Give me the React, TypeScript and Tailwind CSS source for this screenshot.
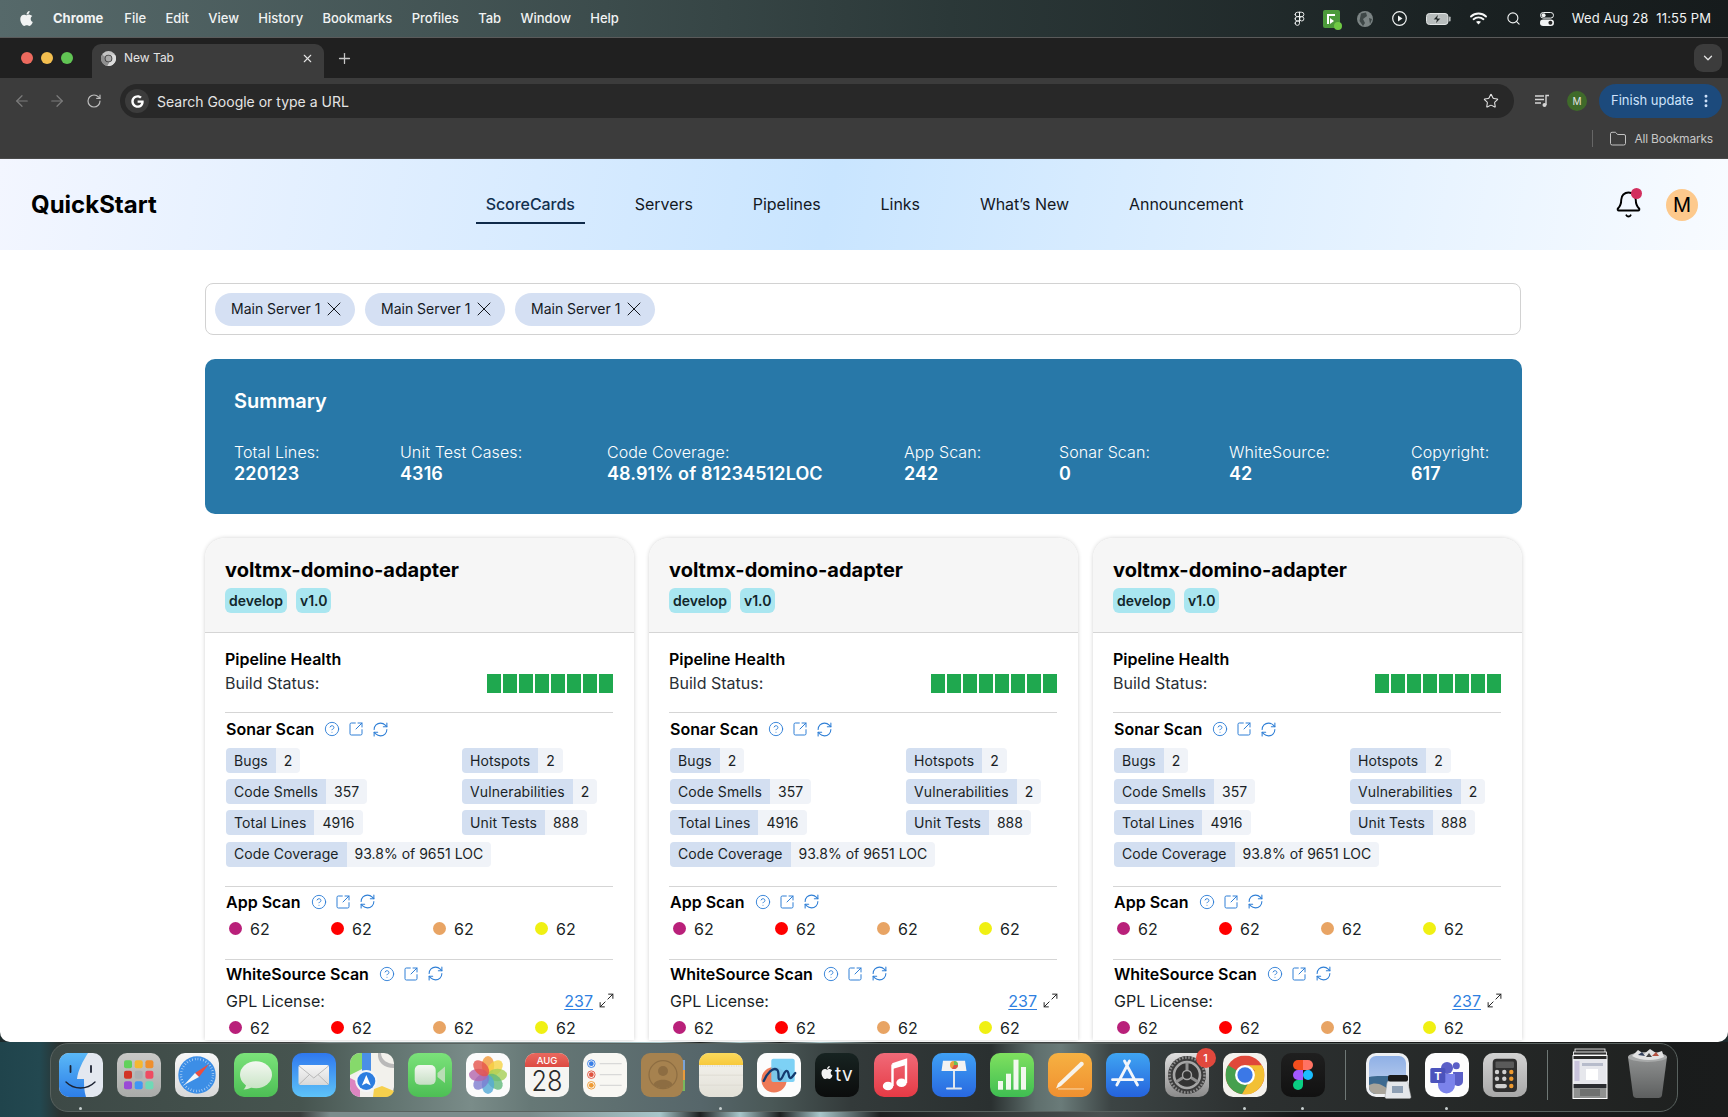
import { FaApple, FaGoogle } from "react-icons/fa";
import {
  ArrowLeft,
  ArrowRight,
  Bell,
  ChevronDown,
  CircleHelp,
  EllipsisVertical,
  Figma,
  Folder,
  Maximize2,
  Plus,
  RefreshCw,
  RotateCw,
  Search,
  Star,
  SquareArrowOutUpRight,
  X,
} from "lucide-react";
import type { ReactNode } from "react";

const menuItems = ["File", "Edit", "View", "History", "Bookmarks", "Profiles", "Tab", "Window", "Help"];
const navItems = ["Servers", "Pipelines", "Links", "What’s New", "Announcement"];
const summary = [
  ["Total Lines:", "220123"],
  ["Unit Test Cases:", "4316"],
  ["Code Coverage:", "48.91% of 81234512LOC"],
  ["App Scan:", "242"],
  ["Sonar Scan:", "0"],
  ["WhiteSource:", "42"],
  ["Copyright:", "617"],
];

// dock tiles are all drawn on the same 44 box
const Tile = ({ children }: { children: ReactNode }) => (
  <svg width="44" height="44" viewBox="0 0 44 44" className="overflow-visible">
    {children}
  </svg>
);

const Grad = ({ id, from, to }: { id: string; from: string; to: string }) => (
  <defs>
    <linearGradient id={id} x1="0" y1="0" x2="0" y2="1">
      <stop offset="0" stopColor={from} />
      <stop offset="1" stopColor={to} />
    </linearGradient>
  </defs>
);

const ChromeLogo = ({ size = 14, grey = false }: { size?: number; grey?: boolean }) => (
  <svg width={size} height={size} viewBox="0 0 24 24">
    <circle cx="12" cy="12" r="12" fill={grey ? "#c4c4c4" : "#e0483a"} />
    <path d="M1.6 6 A12 12 0 0 0 10.2 23.9 L15.2 15 L12 12 L6.8 9 Z" fill={grey ? "#8f8f8f" : "#46a04d"} />
    <path d="M22.4 6 A12 12 0 0 1 10.2 23.9 L15.2 15 L18 9 L12 6 Z" fill={grey ? "#dcdcdc" : "#f2c034"} />
    <circle cx="12" cy="12" r="6.1" fill={grey ? "#3c3c3c" : "#fff"} />
    <circle cx="12" cy="12" r="4.7" fill={grey ? "#a8a8a8" : "#3b78e7"} />
  </svg>
);

const Finder = () => (
  <Tile>
    <Grad id="finderBlue" from="#5ab8f7" to="#2d7ee8" />
    <rect width="44" height="44" rx="10" fill="#e3e8f0" />
    <path d="M10 0 H29 C24 8 19 17 18 26 H25 C25 32 25 38 27 44 H10 A10 10 0 0 1 0 34 V10 A10 10 0 0 1 10 0 Z" fill="url(#finderBlue)" />
    <path d="M11.5 13 v6 M32 13 v6" stroke="#1c2333" strokeWidth="1.8" strokeLinecap="round" />
    <path d="M7 29 C15 37 28 37 36 29" stroke="#1c2333" strokeWidth="1.4" fill="none" strokeLinecap="round" />
  </Tile>
);

const Launchpad = () => {
  const colors = ["#62d15b", "#f5b731", "#ee8f2e", "#d13325", "#aab0b3", "#ee4c62", "#9a4ad6", "#3f97f5", "#6fd9b6"];
  return (
    <Tile>
      <Grad id="padBg" from="#c9c9c7" to="#a9aba9" />
      <rect width="44" height="44" rx="10" fill="url(#padBg)" />
      {colors.map((c, i) => (
        <rect key={i} x={7 + (i % 3) * 10.7} y={7.3 + Math.floor(i / 3) * 10.5} width="8" height="8" rx="2" fill={c} />
      ))}
    </Tile>
  );
};

const Safari = () => (
  <Tile>
    <Grad id="safariBg" from="#f8f8f8" to="#d8d8d8" />
    <rect width="44" height="44" rx="10" fill="url(#safariBg)" />
    <circle cx="22" cy="22" r="18.7" fill="#3c8ee6" />
    <circle cx="22" cy="22" r="16" fill="none" stroke="#cfe4fa" strokeWidth="2.4" strokeDasharray="0.6 2.2" />
    <path d="M34 11 L24 24 L20 20 Z" fill="#ec4d3f" />
    <path d="M9 32 L20 20 L24 24 Z" fill="#f5f5f5" />
  </Tile>
);

const Messages = () => (
  <Tile>
    <Grad id="msgBg" from="#7be27a" to="#4dbf55" />
    <Grad id="msgBubble" from="#f4f8f2" to="#c9e4c6" />
    <rect width="44" height="44" rx="10" fill="url(#msgBg)" />
    <path d="M12 31 C12 34 11 35 9.5 36.5 C13 36.5 16 35.5 18 34 Z" fill="#d3e8d0" />
    <ellipse cx="22" cy="21.7" rx="16" ry="13.5" fill="url(#msgBubble)" />
  </Tile>
);

const Mail = () => (
  <Tile>
    <Grad id="mailBg" from="#2f78ee" to="#5ec3f8" />
    <Grad id="mailEnv" from="#f6f6f6" to="#d9d9d9" />
    <rect width="44" height="44" rx="10" fill="url(#mailBg)" />
    <rect x="6.5" y="12" width="30.5" height="20" rx="2" fill="url(#mailEnv)" />
    <path d="M7 13 L21.8 25 L36.5 13 M7 31.5 L17.5 21.5 M36.5 31.5 L26 21.5" stroke="#adadad" strokeWidth="0.8" fill="none" />
  </Tile>
);

const Maps = () => (
  <Tile>
    <rect width="44" height="44" rx="10" fill="#f2f1ec" />
    <path d="M10 0 H12 V16 L0 22 V10 A10 10 0 0 1 10 0 Z" fill="#86d96b" />
    <path d="M0 25 L10 30 V44 A10 10 0 0 1 0 34 Z" fill="#dc85c0" />
    <path d="M23 44 L24 36 L32 33 L44 38 A10 10 0 0 1 34 44 Z" fill="#f6d04d" />
    <rect x="12" y="0" width="9" height="20" fill="#4a8fe6" />
    <path d="M44 15 C34 15 27 9 28 0 H31 C31 7 38 11 44 11 Z" fill="#b9b9b9" />
    <circle cx="16.3" cy="28" r="11" fill="#f4f6f8" />
    <circle cx="16.3" cy="28" r="9" fill="#2c7de0" />
    <path d="M16.3 22 L20.8 32.5 L16.3 30.3 L11.8 32.5 Z" fill="#fff" />
  </Tile>
);

const FaceTime = () => (
  <Tile>
    <Grad id="ftBg" from="#7be27a" to="#4dbf55" />
    <Grad id="ftCam" from="#f2f7f0" to="#c6dec4" />
    <rect width="44" height="44" rx="10" fill="url(#ftBg)" />
    <rect x="6.7" y="12" width="21" height="19.7" rx="5" fill="url(#ftCam)" />
    <path d="M29.5 20 L37 13.5 V30 L29.5 24 Z" fill="#b9ddb5" />
  </Tile>
);

const Photos = () => {
  const petals = ["#f39a3a", "#f6d344", "#a6cf55", "#62b97c", "#53a9d7", "#7d7ccf", "#b365ac", "#e5534b"];
  return (
    <Tile>
      <rect width="44" height="44" rx="10" fill="#fbfbfb" />
      {petals.map((c, i) => (
        <ellipse key={i} cx="22" cy="12.5" rx="6.2" ry="9.5" fill={c} fillOpacity="0.8" transform={`rotate(${i * 45} 22 22)`} />
      ))}
    </Tile>
  );
};

const Calendar = () => (
  <Tile>
    <Grad id="calTop" from="#e9695f" to="#dd4a42" />
    <rect width="44" height="44" rx="10" fill="#f6f5f2" />
    <path d="M10 0 H34 A10 10 0 0 1 44 10 V14 H0 V10 A10 10 0 0 1 10 0 Z" fill="url(#calTop)" />
    <text x="22" y="11" textAnchor="middle" fontSize="9.5" fontWeight="500" fill="#fff" fontFamily="Inter, sans-serif">AUG</text>
    <text x="22" y="37.5" textAnchor="middle" fontSize="28" fontWeight="300" fill="#2a2a2a" fontFamily="Inter, sans-serif" textLength="31" lengthAdjust="spacingAndGlyphs">28</text>
  </Tile>
);

const Reminders = () => (
  <Tile>
    <rect width="44" height="44" rx="10" fill="#f8f7f3" />
    {[
      { c: "#3a7fe8", y: 10.7 },
      { c: "#e0523f", y: 21.7 },
      { c: "#ee9a33", y: 32.3 },
    ].map(({ c, y }) => (
      <g key={c}>
        <circle cx="8.3" cy={y} r="3.8" fill="none" stroke={c} strokeWidth="0.9" />
        <circle cx="8.3" cy={y} r="2.4" fill={c} />
        <rect x="16.7" y={y - 0.5} width="22" height="1" fill="#d2d2d2" />
      </g>
    ))}
  </Tile>
);

const Contacts = () => (
  <Tile>
    <rect x="40" y="7" width="4" height="10" fill="#7aa3d8" />
    <rect x="40" y="17" width="4" height="10" fill="#e99b3c" />
    <rect x="40" y="27" width="4" height="11" fill="#79b95c" />
    <rect width="42" height="44" rx="9" fill="#a6824f" />
    <circle cx="22" cy="21.7" r="14" fill="none" stroke="#8d6d42" strokeWidth="1.2" />
    <circle cx="22" cy="18" r="5" fill="#8d6d42" />
    <path d="M12.5 31.5 C14 25 30 25 31.5 31.5 A14 14 0 0 1 12.5 31.5 Z" fill="#8d6d42" />
  </Tile>
);

const Notes = () => (
  <Tile>
    <Grad id="noteTop" from="#fbd95c" to="#f7c93c" />
    <Grad id="noteBody" from="#f6f5f0" to="#e2e0d7" />
    <rect width="44" height="44" rx="10" fill="url(#noteBody)" />
    <path d="M10 0 H34 A10 10 0 0 1 44 10 V12 H0 V10 A10 10 0 0 1 10 0 Z" fill="url(#noteTop)" />
    <path d="M1 13 H43" stroke="#c9c7bd" strokeWidth="0.7" strokeDasharray="1 1.4" />
    {[21.7, 31.7].map((y) => (
      <rect key={y} x="0" y={y} width="44" height="0.9" fill="#dddbd2" />
    ))}
  </Tile>
);

const Freeform = () => (
  <Tile>
    <rect width="44" height="44" rx="10" fill="#fcfcfc" />
    <circle cx="17" cy="26.7" r="12.7" fill="#ee7a58" />
    <rect x="14.3" y="5.7" width="23.4" height="23.3" rx="2" fill="#72cdf4" fillOpacity="0.92" />
    <path d="M6.7 28 C10 20 16 14 20 16.7 C23 19 20 27 23 26.7 C26 26 27 17 30 18 C32.5 19 31 25 33.3 25 C35 25 36.5 22 38.3 20" stroke="#143a6e" strokeWidth="2.3" fill="none" strokeLinecap="round" />
  </Tile>
);

const AppleTv = () => (
  <Tile>
    <Grad id="tvBg" from="#172321" to="#0b0c0c" />
    <rect width="44" height="44" rx="10" fill="url(#tvBg)" />
    <FaApple x="4.5" y="12" size="15" color="#f2f2f2" />
    <text x="20" y="28" fontSize="19" letterSpacing="0.5" fill="#f2f2f2" fontFamily="Inter, sans-serif">tv</text>
  </Tile>
);

const Music = () => (
  <Tile>
    <Grad id="musicBg" from="#f06a78" to="#e63a45" />
    <rect width="44" height="44" rx="10" fill="url(#musicBg)" />
    <path d="M18.5 11.5 L32 7 V30 M18.5 11.5 V33" stroke="#fff" strokeWidth="2.4" fill="none" />
    <path d="M18.5 11 L32 7 V12 L18.5 16 Z" fill="#fff" />
    <ellipse cx="14" cy="33" rx="5.2" ry="4.3" fill="#fff" />
    <ellipse cx="27.5" cy="29.8" rx="5.2" ry="4.3" fill="#fff" />
  </Tile>
);

const Keynote = () => (
  <Tile>
    <Grad id="keyBg" from="#3fa0f4" to="#2868e0" />
    <rect width="44" height="44" rx="10" fill="url(#keyBg)" />
    <path d="M11 7.7 H33 L34.5 18 H9.5 Z" fill="#f2f2f2" />
    <circle cx="22" cy="12" r="4" fill="#e9a13c" />
    <path d="M22 12 V8 A4 4 0 0 1 26 12 Z" fill="#6bbf59" />
    <path d="M22 12 H26 A4 4 0 0 1 20 15.4 Z" fill="#d8524a" />
    <rect x="21" y="18" width="2" height="17" fill="#dfe6ee" />
    <rect x="14" y="34.5" width="16" height="2" rx="1" fill="#dfe6ee" />
  </Tile>
);

const Numbers = () => (
  <Tile>
    <Grad id="numBg" from="#7fe05f" to="#3fbe52" />
    <rect width="44" height="44" rx="10" fill="url(#numBg)" />
    <rect x="8" y="28" width="5" height="8.7" fill="#f1f8ee" />
    <rect x="16" y="20.7" width="5" height="16" fill="#f1f8ee" />
    <rect x="23.5" y="6.7" width="5" height="30" fill="#f1f8ee" />
    <rect x="31" y="14" width="5" height="22.7" fill="#f1f8ee" />
  </Tile>
);

const Pages = () => (
  <Tile>
    <Grad id="pagesBg" from="#f6b142" to="#f09030" />
    <rect width="44" height="44" rx="10" fill="url(#pagesBg)" />
    <path d="M32.5 9 C34.5 8 36.5 10 35.5 12 L13 33 L8 35.5 L10 30.5 Z" fill="#f7f3ea" />
    <rect x="10" y="35.3" width="26" height="1.3" fill="#f8cb92" />
  </Tile>
);

const AppStore = () => (
  <Tile>
    <Grad id="storeBg" from="#3fa5f2" to="#2563dd" />
    <rect width="44" height="44" rx="10" fill="url(#storeBg)" />
    <path d="M18.5 8 L31.5 32 M23.5 8 L10.8 32 M6.5 26.7 H36.5" stroke="#f2f6fb" strokeWidth="2.8" strokeLinecap="round" />
  </Tile>
);

const SettingsIcon = () => (
  <Tile>
    <Grad id="setBg" from="#e0e0e0" to="#8a8a8a" />
    <rect width="44" height="44" rx="10" fill="url(#setBg)" />
    <circle cx="22" cy="22" r="19" fill="#3c3c3c" />
    <circle cx="22" cy="22" r="17.5" fill="none" stroke="#8d8d8d" strokeWidth="2.6" strokeDasharray="1.6 1.6" />
    <circle cx="22" cy="22" r="13" fill="#333" stroke="#a6a6a6" strokeWidth="2.6" />
    <path d="M22 22 V9.5 M22 22 L11 29 M22 22 L33 29" stroke="#8f8f8f" strokeWidth="3" />
    <circle cx="22" cy="22" r="4.5" fill="#333" stroke="#a6a6a6" strokeWidth="1.4" />
  </Tile>
);

const ChromeTile = () => (
  <Tile>
    <rect width="44" height="44" rx="10" fill="#f4f2ee" />
    <g transform="translate(2.5 2.5)">
      <ChromeLogo size={39} />
    </g>
  </Tile>
);

const FigmaTile = () => (
  <Tile>
    <Grad id="figmaBg" from="#1f1f1f" to="#111" />
    <rect width="44" height="44" rx="10" fill="url(#figmaBg)" />
    <path d="M17 7 H22 V17 H17 A5 5 0 0 1 17 7 Z" fill="#f24e1e" />
    <path d="M22 7 H27 A5 5 0 0 1 27 17 H22 Z" fill="#ff7262" />
    <path d="M17 17 H22 V27 H17 A5 5 0 0 1 17 17 Z" fill="#a259ff" />
    <circle cx="27" cy="22" r="5" fill="#1abcfe" />
    <path d="M17 27 H22 V32 A5 5 0 1 1 17 27 Z" fill="#0acf83" />
  </Tile>
);

const Preview = () => (
  <Tile>
    <Grad id="prevSky" from="#8fb0e6" to="#c4d4ee" />
    <rect width="43" height="44" rx="10" fill="#eef0f3" />
    <rect x="3" y="3" width="37" height="38" rx="7" fill="url(#prevSky)" />
    <path d="M3 24 C12 22 26 24 40 23 V34 A7 7 0 0 1 33 41 H10 A7 7 0 0 1 3 34 Z" fill="#3d6a90" />
    <path d="M3 32 C10 28 18 32 24 38 V41 H10 A7 7 0 0 1 3 34 Z" fill="#a8a49a" />
    <path d="M21 30 C21 28 23 28 24 28 H40 C41 28 42 29 42 30 L45 44 C45 45 44 45.5 43 45.5 H21 C20 45.5 19 45 19 44 Z" fill="#e4e7ea" stroke="#9a9a9a" strokeWidth="0.5" />
    <rect x="22" y="22" width="20" height="6.5" rx="2" fill="#1a1a1a" />
    <rect x="26" y="33" width="11" height="7" fill="#8ea0b4" />
  </Tile>
);

const Teams = () => (
  <Tile>
    <rect width="44" height="44" rx="10" fill="#fdfdfd" />
    <circle cx="22" cy="15" r="6" fill="#5b5fc7" />
    <circle cx="31.3" cy="12.7" r="3.5" fill="#5b5fc7" />
    <path d="M28 19 H38 V28 A5 5 0 0 1 29 31 Z" fill="#5b5fc7" />
    <path d="M13 21 H30 V32 A8.5 8.5 0 0 1 13 32 Z" fill="#7b83eb" />
    <rect x="5.3" y="15" width="15" height="15" rx="1.5" fill="#4b53bc" />
    <text x="12.8" y="26.5" textAnchor="middle" fontSize="11" fontWeight="700" fill="#fff" fontFamily="Inter, sans-serif">T</text>
  </Tile>
);

const Calculator = () => (
  <Tile>
    <Grad id="calcBg" from="#d2d2d2" to="#a8a8a8" />
    <rect width="44" height="44" rx="10" fill="url(#calcBg)" />
    <rect x="9.7" y="5.7" width="24.3" height="33.3" rx="4" fill="#2f2f2f" />
    <rect x="12.5" y="8.5" width="18.5" height="6.5" rx="1" fill="#5a5a5a" />
    {[19, 25.7].map((y) =>
      [14, 21.3, 28.3].map((x) => (
        <circle key={`${x}-${y}`} cx={x} cy={y} r="2.2" fill={x === 28.3 ? "#ef9a2f" : "#cfcfcf"} />
      ))
    )}
    <rect x="12" y="31" width="12" height="4.2" rx="2.1" fill="#cfcfcf" />
    <circle cx="28.3" cy="33" r="2.2" fill="#ef9a2f" />
  </Tile>
);

const DocThumb = () => (
  <Tile>
    <rect x="7" y="-4" width="30" height="4" fill="#333" stroke="#fff" strokeWidth="0.8" />
    <rect x="5.5" y="-1" width="33" height="3" fill="#333" stroke="#fff" strokeWidth="0.8" />
    <rect x="4.5" y="2" width="35" height="44" fill="#fff" />
    <rect x="5.5" y="3" width="33" height="28" fill="#e6e7ec" />
    <rect x="5.5" y="3" width="33" height="3" fill="#2a2a2a" />
    <rect x="6.5" y="8" width="5" height="20" fill="#c9c4dc" />
    <rect x="14" y="10" width="21" height="3" fill="#b7bccb" />
    <rect x="18" y="16" width="12" height="11" fill="#fff" />
    <rect x="5.5" y="31" width="33" height="4" fill="#2a2c30" />
    <rect x="5.5" y="35" width="33" height="10" fill="#8f9190" />
    <rect x="12" y="36" width="20" height="7" fill="#6f7170" />
  </Tile>
);

const Trash = () => (
  <Tile>
    <Grad id="trashBody" from="#8f9191" to="#5d5f5f" />
    <path d="M2 4 H41 L36 42 C35.5 45 33 45 31 45 H12 C10 45 7.5 45 7 42 Z" fill="url(#trashBody)" />
    <ellipse cx="21.5" cy="4" rx="19.5" ry="5" fill="#a8aaaa" />
    <path d="M6 3 L12 -3 L18 1 L24 -4 L30 0 L36 -2 L38 4 C30 8 14 8 6 3 Z" fill="#e2e2e2" />
    <path d="M12 2 L16 -1 L19 3 Z" fill="#33405a" />
    <path d="M26 3 L30 -1 L33 3 Z" fill="#b4503f" />
    <path d="M20 4 L23 0 L26 4 Z" fill="#444" />
  </Tile>
);

const DockItem = ({ children, running }: { children: ReactNode; running?: boolean }) => (
  <div className="relative h-11 w-11 shrink-0">
    {children}
    {running && <span className="absolute bottom-[-13px] left-[20px] h-[3px] w-[3px] rounded-full bg-[#c8d0d0]" />}
  </div>
);

const Dock = () => (
  <div className="flex h-[75px] shrink-0 justify-center bg-[linear-gradient(90deg,#20444c_0px,#234850_40px,#2a3230_60px,#3a3d3c_300px,#7c8c8c_330px,#7c8c8c_530px,#a8c6ca_660px,#1d2020_700px,#a8c6ca_740px,#1d2020_780px,#a8c6ca_820px,#1d2020_880px,#4a5050_1100px,#161818_1300px,#1a1c1c_1728px)]">
    <div className="mt-px flex h-[69px] w-[1628px] items-center gap-[14.2px] rounded-[18px] border border-[#59625f] bg-[linear-gradient(90deg,#3d4946_0px,#46544f_250px,#5f716d_330px,#7a8c89_420px,#667876_480px,#56666a_650px,#4a5857_720px,#333a3a_800px,#2a3030_940px,#5f6f6d_985px,#6a7b79_1010px,#3c4444_1060px,#2c3030_1200px,#1f2120_1628px)] pb-[5px] pl-[8px]">
      <DockItem running><Finder /></DockItem>
      <DockItem><Launchpad /></DockItem>
      <DockItem><Safari /></DockItem>
      <DockItem><Messages /></DockItem>
      <DockItem><Mail /></DockItem>
      <DockItem><Maps /></DockItem>
      <DockItem><FaceTime /></DockItem>
      <DockItem><Photos /></DockItem>
      <DockItem><Calendar /></DockItem>
      <DockItem><Reminders /></DockItem>
      <DockItem><Contacts /></DockItem>
      <DockItem running><Notes /></DockItem>
      <DockItem><Freeform /></DockItem>
      <DockItem><AppleTv /></DockItem>
      <DockItem><Music /></DockItem>
      <DockItem><Keynote /></DockItem>
      <DockItem><Numbers /></DockItem>
      <DockItem><Pages /></DockItem>
      <DockItem><AppStore /></DockItem>
      <DockItem>
        <SettingsIcon />
        <span className="absolute right-[-7px] top-[-5px] flex h-5 w-5 items-center justify-center rounded-full bg-[#e2483d] text-[11px] font-medium text-white">1</span>
      </DockItem>
      <DockItem running><ChromeTile /></DockItem>
      <DockItem running><FigmaTile /></DockItem>
      <div className="mx-[6px] h-[50px] w-px bg-[#6f7876]" />
      <DockItem><Preview /></DockItem>
      <DockItem running><Teams /></DockItem>
      <DockItem><Calculator /></DockItem>
      <div className="mx-[6px] h-[50px] w-px bg-[#6f7876]" />
      <DockItem><DocThumb /></DockItem>
      <DockItem><Trash /></DockItem>
    </div>
  </div>
);

const MenuBar = () => (
  <div className="flex h-[37px] shrink-0 items-center bg-[linear-gradient(90deg,#56696a_0%,#3c4c4c_35%,#2b3838_55%,#1a2122_85%,#161b1c_100%)] pl-[18px] pr-[17px] text-[13px] font-medium text-[#f1f3f3]">
    <FaApple size={17} />
    <span className="ml-[18px] font-bold">Chrome</span>
    <div className="ml-[21px] flex gap-[19.3px]">
      {menuItems.map((m) => (
        <span key={m}>{m}</span>
      ))}
    </div>
    <div className="ml-auto flex items-center gap-[19px]">
      <Figma size={15} strokeWidth={1.5} className="-ml-[2px] -mr-[3px]" />
      <span className="relative -mr-[2px] block h-[18px] w-[17px] rounded-[2px] bg-[#4c9a3a]">
        <span className="absolute left-[4px] top-[4px] block h-[10px] w-[8px] border-l-2 border-t-2 border-white" />
        <span className="absolute left-[7px] top-[8px] block h-0 w-0 border-y-[3px] border-l-[4px] border-y-transparent border-l-white" />
        <span className="absolute bottom-[-2px] right-[-2px] block h-[8px] w-[8px] rounded-full bg-[#6fc944]" />
      </span>
      <svg width="16" height="16" viewBox="0 0 16 16">
        <circle cx="8" cy="8" r="8" fill="#7b8484" />
        <path d="M4 2.5 L9 1.5 L10 5 L6 8 L8 12 L6 15 L2.5 10 Z M12 7 L15 8 L13 13 Z" fill="#3e4747" />
      </svg>
      <svg width="15" height="15" viewBox="0 0 15 15">
        <circle cx="7.5" cy="7.5" r="6.8" fill="none" stroke="#f1f3f3" strokeWidth="1.2" />
        <path d="M6 4.5 L10.5 7.5 L6 10.5 Z" fill="#f1f3f3" />
      </svg>
      <svg width="25" height="12" viewBox="0 0 25 12">
        <rect x="0.5" y="0.5" width="21.5" height="11" rx="3" fill="#b7bcbc" stroke="#e2e5e5" />
        <rect x="23" y="3.5" width="1.6" height="5" rx="0.8" fill="#b7bcbc" />
        <path d="M12.5 1 L7 6.8 H10.5 L9.5 11 L15 5.2 H11.5 Z" fill="#1f2626" stroke="#e8eaea" strokeWidth="0.5" />
      </svg>
      <svg width="17" height="13" viewBox="0 0 17 13">
        <path d="M1 4.5 C5.2 0.5 11.8 0.5 16 4.5 M3.6 7.2 C6.3 4.7 10.7 4.7 13.4 7.2" stroke="#f6f7f7" strokeWidth="1.9" fill="none" strokeLinecap="round" />
        <path d="M6 9.8 C7.4 8.6 9.6 8.6 11 9.8 L8.5 12.6 Z" fill="#f6f7f7" />
      </svg>
      <Search size={15} strokeWidth={1.8} />
      <svg width="14" height="14" viewBox="0 0 14 14">
        <rect x="0.5" y="0.5" width="13" height="5.6" rx="2.8" fill="none" stroke="#f1f3f3" strokeWidth="1" />
        <circle cx="3.6" cy="3.3" r="2" fill="#f1f3f3" />
        <rect x="0" y="7.5" width="14" height="6.5" rx="3.2" fill="#f1f3f3" />
        <circle cx="10.4" cy="10.7" r="2" fill="#222" />
      </svg>
      <div className="ml-[-1px] flex gap-[8px] font-normal tracking-[0.1px]">
        <span>Wed Aug 28</span>
        <span>11:55 PM</span>
      </div>
    </div>
  </div>
);

const BrowserChrome = () => (
  <div className="shrink-0 bg-[#3c3c3c] text-[#e4e4e4]">
    <div className="flex h-[41px] items-end border-t border-[#5a5a5a] bg-[#202020] pr-[6px]">
      <div className="flex h-[40px] w-[92px] items-center gap-[8px] pl-[21px]">
        <span className="h-3 w-3 rounded-full bg-[#ed6a5e]" />
        <span className="h-3 w-3 rounded-full bg-[#f4bf4f]" />
        <span className="h-3 w-3 rounded-full bg-[#61c554]" />
      </div>
      <div className="flex h-[34px] w-[232px] items-center rounded-t-[9px] bg-[#3c3c3c] pb-[6px] pl-[9px] pr-[10px] text-[12px]">
        <ChromeLogo size={15} grey />
        <span className="ml-[8px]">New Tab</span>
        <X size={13} strokeWidth={2} className="ml-auto" />
      </div>
      <Plus size={17} strokeWidth={1.8} className="mb-[11px] ml-[12px] text-[#c8c8c8]" />
      <div className="mb-[6px] ml-auto flex h-[28px] w-[28px] items-center justify-center rounded-[9px] bg-[#3c3c3c]">
        <ChevronDown size={14} strokeWidth={2.2} />
      </div>
    </div>
    <div className="flex h-[46px] items-center pl-[13px]">
      <ArrowLeft size={18} strokeWidth={1.6} className="text-[#7c7c7c]" />
      <ArrowRight size={18} strokeWidth={1.6} className="ml-[17px] text-[#7c7c7c]" />
      <RotateCw size={16} strokeWidth={1.8} className="ml-[20px] text-[#bdbdbd]" />
      <div className="ml-[18px] flex h-[34px] w-[1394px] items-center rounded-full bg-[#282828] pl-[5px] pr-[15px] text-[14px]">
        <span className="flex h-[24px] w-[24px] items-center justify-center rounded-full bg-[#3c3c3c]">
          <FaGoogle size={13} className="text-white" />
        </span>
        <span className="ml-[8px]">Search Google or type a URL</span>
        <Star size={16} strokeWidth={1.6} className="ml-auto" />
      </div>
      <svg width="16" height="14" viewBox="0 0 16 14" className="ml-[20px]">
        <path d="M1 2 H10 M1 5.5 H10 M1 9 H7" stroke="#d5d5d5" strokeWidth="1.4" />
        <path d="M12 11 V1.5 H15" stroke="#d5d5d5" strokeWidth="1.4" fill="none" />
        <circle cx="10.5" cy="11" r="2" fill="#d5d5d5" />
      </svg>
      <span className="ml-[17px] flex h-5 w-5 items-center justify-center rounded-full bg-[#3f6a2a] text-[10px]">M</span>
      <div className="ml-[12px] flex h-[34px] w-[123px] items-center rounded-full bg-[#1c4a7c] pl-[12px] text-[13px] text-[#cfe3fb]">
        Finish update
        <EllipsisVertical size={16} strokeWidth={2.4} className="ml-[5px]" />
      </div>
    </div>
    <div className="flex h-[35px] items-start justify-end border-b border-[#4a4a4a] pr-[15px] pt-[6px] text-[12px] tracking-[-0.2px] text-[#c7c7c7]">
      <span className="h-[17px] w-px bg-[#666]" />
      <Folder size={18} strokeWidth={1.3} className="ml-[16px] mt-0" />
      <span className="ml-[7px]">All Bookmarks</span>
    </div>
  </div>
);

const Header = () => (
  <header className="grid h-[91px] shrink-0 grid-cols-[1fr_auto_1fr] items-center bg-[linear-gradient(100deg,#f3f6ff_0%,#c9e5ff_48%,#f8fbff_100%)] pl-[31px] pr-[30px]">
    <h1 className="text-2xl font-bold text-black">QuickStart</h1>
    <nav className="flex items-center gap-10 text-base tracking-[-0.05px] text-[#14181f]">
      <a className="border-b-2 border-[#0f2a4a] px-[10px] pb-[6px] pt-[7px] font-medium text-[#12304f]">ScoreCards</a>
      {navItems.map((n) => (
        <a key={n} className="border-b-2 border-transparent px-[10px] pb-[6px] pt-[7px]">
          {n}
        </a>
      ))}
    </nav>
    <div className="flex items-center justify-end gap-[23px]">
      <div className="relative">
        <Bell size={29} strokeWidth={1.6} className="text-black" />
        <span className="absolute right-[1px] top-[-2px] h-[11px] w-[11px] rounded-full bg-[#d22f5e]" />
      </div>
      <span className="flex h-[32px] w-[32px] items-center justify-center rounded-full bg-[#fdc98c] text-[20px] text-black">M</span>
    </div>
  </header>
);

const FilterBar = () => (
  <div className="mr-px flex h-[52px] items-center gap-[10px] rounded-lg border border-[#d2d2d2] pl-[9px]">
    {[1, 2, 3].map((i) => (
      <span key={i} className="flex h-[33px] w-[140px] items-center gap-[5px] rounded-full bg-[#d5e0f3] pl-[16px] text-sm text-[#14181f]">
        Main Server 1
        <X size={24} strokeWidth={1} className="-mx-[3px]" />
      </span>
    ))}
  </div>
);

const Summary = () => (
  <section className="mt-[24px] h-[155px] rounded-[10px] bg-[#2878a8] px-[29px] pt-[28px] text-white">
    <h2 className="text-xl font-semibold">Summary</h2>
    <div className="mt-[25px] grid grid-cols-[166px_207px_297px_155px_170px_182px_auto]">
      {summary.map(([k, v]) => (
        <div key={k}>
          <div className="text-base font-light leading-6 tracking-[0.1px]">{k}</div>
          <div className="text-lg font-semibold leading-5 tracking-[0.1px]">{v}</div>
        </div>
      ))}
    </div>
  </section>
);

const ScanTitle = ({ title }: { title: string }) => (
  <div className="ml-px flex h-6 items-center">
    <span className="text-base font-semibold text-black">{title}</span>
    <div className="ml-[10px] flex items-center gap-2 text-[#2f7fd6]">
      <CircleHelp size={16} strokeWidth={1.4} />
      <SquareArrowOutUpRight size={16} strokeWidth={1.5} />
      <RefreshCw size={17} strokeWidth={1.5} />
    </div>
  </div>
);

const Metric = ({ label, value }: { label: string; value: string }) => (
  <div className="inline-flex h-[25px] w-fit overflow-hidden rounded text-sm text-[#1a1f26]">
    <span className="flex items-center bg-[#d3dff1] px-2 tracking-[0.1px]">{label}</span>
    <span className="flex items-center bg-[#f0f3f8] px-2">{value}</span>
  </div>
);

const Counts = () => (
  <div className="grid h-6 grid-cols-[102px_102px_102px_auto] items-center">
    {["bg-[#b9207a]", "bg-[#ff0000]", "bg-[#e8a464]", "bg-[#f0f013]"].map((dot) => (
      <div key={dot} className="flex items-center gap-[8px] pl-[4px] text-base text-[#1a1f26]">
        <span className={`h-[13px] w-[13px] rounded-full ${dot}`} />
        62
      </div>
    ))}
  </div>
);

const Card = () => (
  <article className="rounded-t-[20px] shadow-[0_0_4px_rgba(0,0,0,0.18)]">
    <div className="h-[95px] rounded-t-[20px] border-b border-[#d5d5d5] bg-[#f6f6f6] px-5 pt-[18px]">
      <h3 className="text-xl font-bold leading-7 text-black">voltmx-domino-adapter</h3>
      <div className="mt-1 flex gap-[9px]">
        <span className="flex h-[25px] items-center rounded-md bg-[#a9e6f0] px-1 text-sm font-semibold text-[#12262b]">develop</span>
        <span className="flex h-[25px] items-center rounded-md bg-[#a9e6f0] px-1 text-sm font-semibold text-[#12262b]">v1.0</span>
      </div>
    </div>
    <div className="bg-white pl-5 pr-[21px] pt-[14px]">
      <div className="text-base font-semibold leading-6 text-black">Pipeline Health</div>
      <div className="flex h-6 items-center justify-between text-base text-[#2a2f36]">
        Build Status:
        <div className="flex gap-[2px]">
          {[0, 1, 2, 3, 4, 5, 6, 7].map((i) => (
            <span key={i} className="h-[19px] w-[14px] bg-[#1fa84f]" />
          ))}
        </div>
      </div>
      <div className="mt-[17px] border-t border-[#d5d5d5] pt-[4px]">
        <ScanTitle title="Sonar Scan" />
        <div className="ml-px mt-[7px] grid grid-cols-[236px_1fr] gap-y-[6px]">
          <Metric label="Bugs" value="2" />
          <Metric label="Hotspots" value="2" />
          <Metric label="Code Smells" value="357" />
          <Metric label="Vulnerabilities" value="2" />
          <Metric label="Total Lines" value="4916" />
          <Metric label="Unit Tests" value="888" />
          <div className="col-span-2">
            <Metric label="Code Coverage" value="93.8% of 9651 LOC" />
          </div>
        </div>
      </div>
      <div className="mt-[19px] border-t border-[#d5d5d5] pt-[3px]">
        <ScanTitle title="App Scan" />
        <div className="mt-[3px]">
          <Counts />
        </div>
      </div>
      <div className="mt-[18px] border-t border-[#d5d5d5] pt-[2px]">
        <ScanTitle title="WhiteSource Scan" />
        <div className="mt-[3px] flex h-6 items-center justify-between pl-px text-base text-[#1a1f26]">
          GPL License:
          <div className="flex items-center gap-[5px]">
            <a className="text-[#2f7fe0] underline underline-offset-2">237</a>
            <Maximize2 size={17} strokeWidth={1.4} className="-mr-[2px] text-[#222]" />
          </div>
        </div>
        <div className="mt-[3px]">
          <Counts />
        </div>
      </div>
    </div>
  </article>
);

const App = () => {
  return (
    <div className="flex h-[1117px] w-[1728px] flex-col overflow-hidden bg-[#1c2a2c] font-['Inter',sans-serif]">
      <MenuBar />
      <BrowserChrome />
      <main className="flex h-[883px] shrink-0 flex-col overflow-hidden rounded-b-[10px] bg-white">
        <Header />
        <div className="pl-[205px] pr-[206px] pt-[33px]">
          <FilterBar />
          <Summary />
          <div className="mt-[24px] grid grid-cols-3 gap-[15px]">
            <Card />
            <Card />
            <Card />
          </div>
        </div>
      </main>
      <Dock />
    </div>
  );
};

export default App;
